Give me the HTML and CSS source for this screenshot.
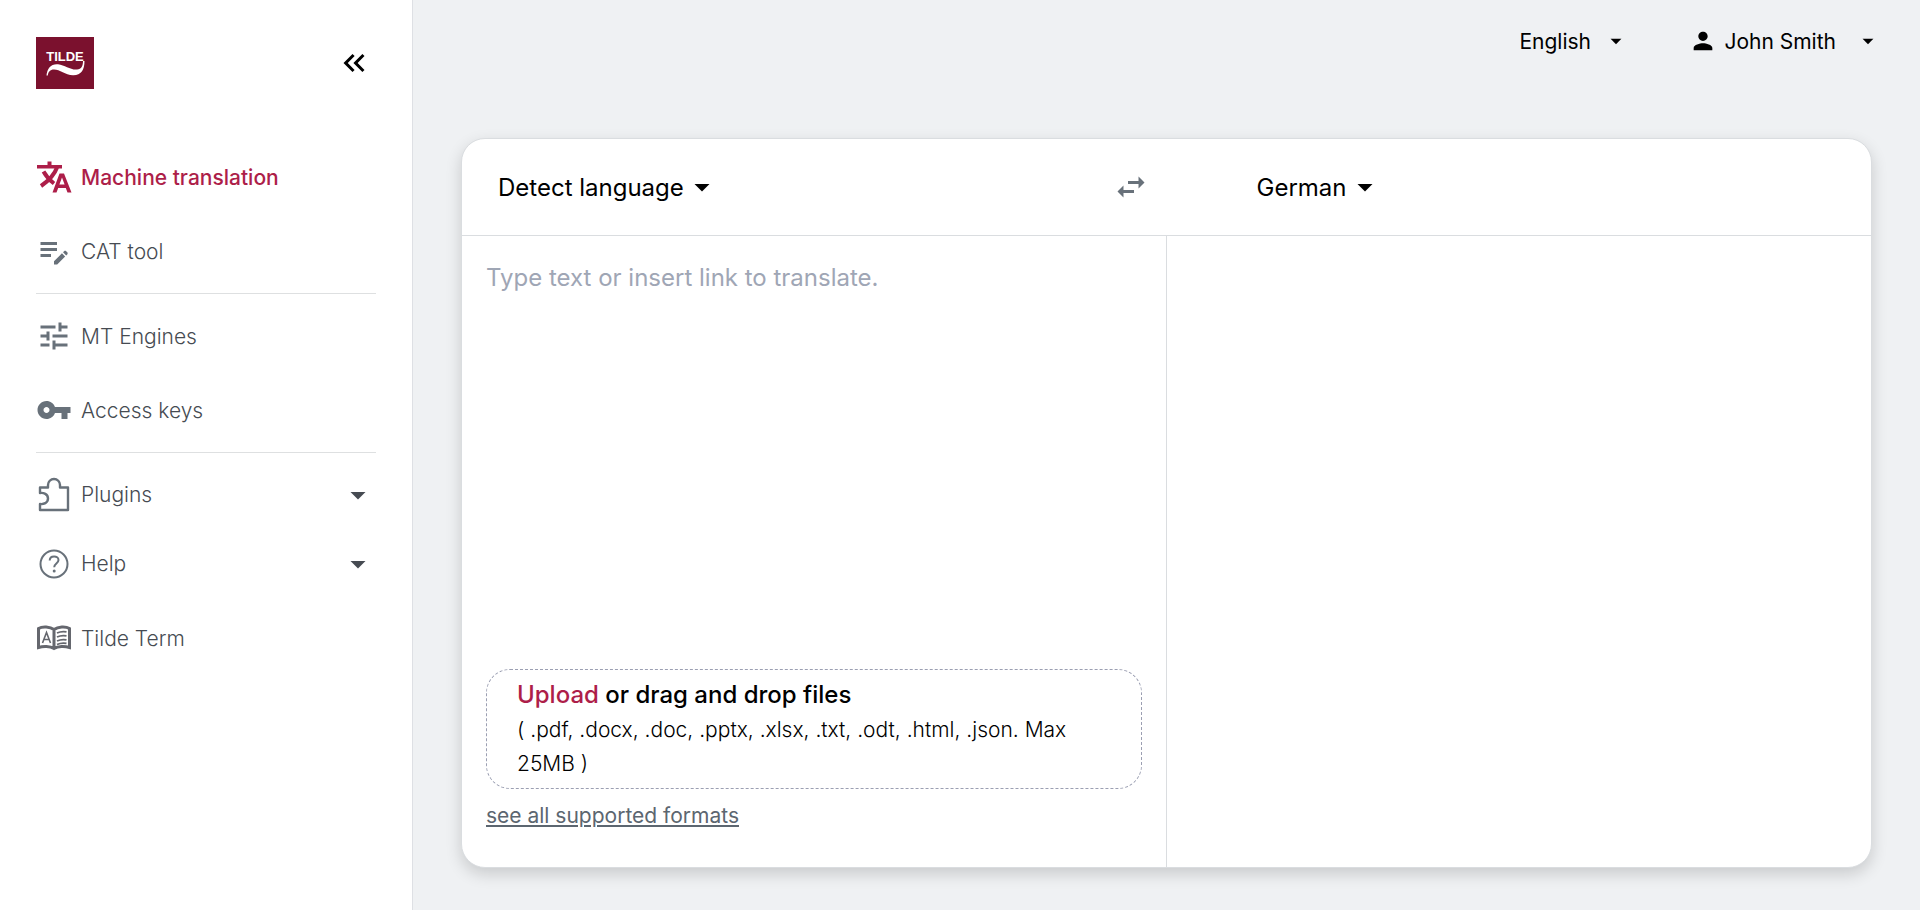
FILE: index.html
```html
<!DOCTYPE html>
<html lang="en">
<head>
<meta charset="utf-8">
<title>Tilde MT</title>
<link rel="stylesheet" href="styles.css">
</head>
<body>
<div class="app">
  <aside class="sidebar">
    <div class="brand">
      <a class="logo" href="#" aria-label="Tilde">
        <svg viewBox="0 0 58 52" width="58" height="52">
          <rect width="58" height="52" fill="#7b112e"/>
          <text class="logo-text" x="29" y="24" text-anchor="middle">TILDE</text>
          <path d="M10.500 38.500C11 31 15.500 26.500 22 27.200C29 28 34 33 41 32.500C45.500 32 47 29 47 24H48.500C48.500 33 45 38.500 37 38.300C29 38 24 32.500 18 32.500C14 32.500 12.200 35 11.800 38.500Z" fill="#fff"/>
        </svg>
      </a>
      <button class="icon-button" type="button" aria-label="Collapse menu">
        <svg class="icon" viewBox="0 0 24 24"><path d="M17.590 18 19 16.590 14.420 12 19 7.410 17.590 6l-6 6zM11 18l1.410-1.410L7.830 12l4.580-4.590L11 6l-6 6z"/></svg>
      </button>
    </div>
    <nav class="nav">
      <div class="nav-group">
        <a class="nav-item active" href="#">
          <svg class="icon" viewBox="0 0 36 36"><path d="M1 6h10.500V2.500h4V6h10.500v3.500H1z"/><path d="M21 8.500C18.500 15.500 13 21.500 5 27M7.500 12.500C10 17 14 21.500 18 24.500" fill="none" stroke="currentColor" stroke-width="4"/><path fill-rule="evenodd" d="M23.500 14.500h4.500l7.500 19h-4l-1.700-4.500h-7.600L20.500 33.500h-4zM23.400 25.500h5.200L26 18.500z"/></svg>
          <span>Machine translation</span>
        </a>
        <a class="nav-item" href="#">
          <svg class="icon" viewBox="0 0 24 24"><path d="M3 10h11v2H3zm0-2h11V6H3zm0 8h7v-2H3zm15.010-3.130.710-.710c.390-.390 1.020-.390 1.410 0l.710.710c.390.390.390 1.020 0 1.410l-.710.710zm-.710.710-5.300 5.300V21h2.120l5.300-5.300z"/></svg>
          <span>CAT tool</span>
        </a>
      </div>
      <div class="nav-group">
        <a class="nav-item" href="#">
          <svg class="icon" viewBox="0 0 24 24"><path d="M3 17v2h6v-2zM3 5v2h10V5zm10 16v-2h8v-2h-8v-2h-2v6zM7 9v2H3v2h4v2h2V9zm14 4v-2H11v2zm-6-4h2V7h4V5h-4V3h-2z"/></svg>
          <span>MT Engines</span>
        </a>
        <a class="nav-item" href="#">
          <svg class="icon" viewBox="0 0 24 24"><path d="M12.650 10C11.830 7.670 9.610 6 7 6c-3.310 0-6 2.690-6 6s2.690 6 6 6c2.610 0 4.830-1.670 5.650-4H17v4h4v-4h2v-4zM7 14c-1.100 0-2-.9-2-2s.9-2 2-2 2 .9 2 2-.9 2-2 2z"/></svg>
          <span>Access keys</span>
        </a>
      </div>
      <div class="nav-group">
        <button class="nav-item compact" type="button">
          <svg class="icon" viewBox="0 0 36 36"><path d="M4 10.500h8v-2.500a6 6 0 0 1 12 0v2.500h8V33H4v-6c3.500.5 8-1 8-5.500s-4.500-6-8-5.500z" fill="none" stroke="currentColor" stroke-width="2.400" stroke-linejoin="round"/></svg>
          <span>Plugins</span>
          <svg class="icon caret" viewBox="0 0 24 24"><path d="M7 10l5 5 5-5z"/></svg>
        </button>
        <button class="nav-item compact" type="button">
          <svg class="icon" viewBox="0 0 36 36"><g fill="none" stroke="currentColor" stroke-width="2"><circle cx="18" cy="18" r="13.500"/><path d="M13.700 14.500c0-5.500 8.800-5.300 8.800-.5 0 3.500-4.300 3.500-4.300 7.200"/></g><circle cx="18.200" cy="25" r="1.500"/></svg>
          <span>Help</span>
          <svg class="icon caret" viewBox="0 0 24 24"><path d="M7 10l5 5 5-5z"/></svg>
        </button>
        <a class="nav-item last" href="#">
          <svg class="icon" viewBox="0 0 36 36"><g fill="none" stroke="#65676e" stroke-width="3"><path d="M18 9.500C14 6.500 6.500 6 2.500 8.500V27.500C7 26 14 26 18 28.500C22 26 29 26 33.500 27.500V8.500C29.500 6 22 6.500 18 9.500zV28"/><path d="M21 13c3-1.500 6-1.800 9.500-1.200M21 17c3-1.500 6-1.800 9.500-1.200M21 21c3-1.500 6-1.800 9.500-1.200M21 24.500c3-1.500 6-1.800 9.500-1.200" stroke-width="1.800"/><path d="M6.500 23 10.500 12.500l4 10.500M7.800 19.500h5.400" stroke-width="1.600"/></g></svg>
          <span>Tilde Term</span>
        </a>
      </div>
    </nav>
  </aside>

  <div class="content">
    <header class="topbar">
      <div class="picker locale">
        <select aria-label="Interface language"><option>English</option></select>
        <svg class="caret-small" viewBox="0 0 24 24"><path d="M7 10l5 5 5-5z"/></svg>
      </div>
      <button class="user" type="button">
        <svg class="person" viewBox="0 0 24 24"><path d="M12 12c2.210 0 4-1.790 4-4s-1.790-4-4-4-4 1.790-4 4 1.790 4 4 4zm0 2c-2.670 0-8 1.340-8 4v2h16v-2c0-2.660-5.330-4-8-4z"/></svg>
        <span class="user-name">John Smith</span>
        <svg class="caret-small" viewBox="0 0 24 24"><path d="M7 10l5 5 5-5z"/></svg>
      </button>
    </header>

    <main class="translator">
      <div class="languages">
        <div class="source-language">
          <div class="picker">
            <select aria-label="Source language"><option>Detect language</option></select>
            <svg class="icon" viewBox="0 0 24 24"><path d="M7 10l5 5 5-5z"/></svg>
          </div>
          <button class="icon-button swap" type="button" aria-label="Swap languages">
            <svg class="icon" viewBox="0 0 24 24"><path d="M6.990 11 3 15l3.990 4v-3H14v-2H6.990zM21 9l-3.990-4v3H10v2h7.010v3z"/></svg>
          </button>
        </div>
        <div class="target-language">
          <div class="picker">
            <select aria-label="Target language"><option>German</option></select>
            <svg class="icon" viewBox="0 0 24 24"><path d="M7 10l5 5 5-5z"/></svg>
          </div>
        </div>
      </div>
      <div class="panes">
        <section class="source">
          <textarea aria-label="Text to translate" placeholder="Type text or insert link to translate."></textarea>
          <div class="dropzone">
            <p class="drop-title"><button class="upload" type="button">Upload</button> or drag and drop files</p>
            <p class="drop-formats">( .pdf, .docx, .doc, .pptx, .xlsx, .txt, .odt, .html, .json. Max 25MB )</p>
          </div>
          <a class="formats-link" href="#">see all supported formats</a>
        </section>
        <section class="target" aria-label="Translation"></section>
      </div>
    </main>
  </div>
</div>
</body>
</html>
```
FILE: styles.css
```css
* {
  box-sizing: border-box;
}

body {
  margin: 0;
  font-family: Inter, "Liberation Sans", sans-serif;
  font-size: 21px;
  color: #000;
  background: #eff1f3;
}

button,
select,
textarea {
  margin: 0;
  padding: 0;
  border: 0;
  background: none;
  font: inherit;
  color: inherit;
}

svg {
  display: block;
  flex: none;
  fill: currentColor;
}

.icon {
  width: 36px;
  height: 36px;
}

.app {
  display: flex;
  min-height: 100vh;
}

.sidebar {
  flex: none;
  width: 413px;
  padding: 37px 36px;
  border-right: 1px solid #dee0e4;
  background: #fff;
}

.brand {
  display: flex;
  align-items: center;
  justify-content: space-between;
  padding-right: 4px;
  margin-bottom: 51px;
}

.logo-text {
  font: bold 13px "Liberation Sans Narrow", "Liberation Sans", sans-serif;
  fill: #fff;
}

.icon-button {
  cursor: pointer;
}

.nav-group + .nav-group {
  padding-top: 5px;
  margin-top: 5px;
  border-top: 1px solid #dee0e1;
}

.nav-group:last-child {
  padding-top: 7px;
}

.nav-item {
  display: flex;
  align-items: center;
  gap: 9px;
  width: 100%;
  height: 74px;
  color: #464b52;
  font-weight: 300;
  text-align: left;
  text-decoration: none;
}

.nav-item .icon {
  color: #68717a;
}

.nav-item .caret {
  margin-left: auto;
  color: #464b52;
}

.nav-item.compact {
  height: 69px;
}

.nav-item.last {
  margin-top: 3px;
}

.nav-item.active,
.nav-item.active .icon {
  color: #ad1e49;
  font-weight: 500;
}

.content {
  display: flex;
  flex: 1;
  flex-direction: column;
  min-width: 0;
  padding: 0 48px 42px;
}

.topbar {
  display: flex;
  align-items: center;
  justify-content: flex-end;
  gap: 60px;
  height: 82px;
  margin-bottom: 56px;
}

.picker {
  display: flex;
  align-items: center;
}

.picker select {
  appearance: none;
  cursor: pointer;
}

.locale {
  gap: 12px;
}

.user {
  display: flex;
  align-items: center;
  gap: 7px;
  margin-right: -9px;
  cursor: pointer;
}

.user-name {
  margin-right: 12px;
}

.person {
  width: 28px;
  height: 28px;
}

.caret-small {
  width: 26px;
  height: 26px;
}

.translator {
  display: flex;
  flex: 1;
  flex-direction: column;
  border: 1px solid #dadde0;
  border-radius: 24px;
  background: #fff;
  box-shadow: 0 6px 16px rgba(0, 0, 0, 0.16);
}

.languages {
  display: grid;
  grid-template-columns: 1fr 1fr;
  height: 97px;
  border-bottom: 1px solid #dadde0;
  font-size: 24px;
}

.source-language,
.target-language {
  display: flex;
  align-items: center;
  justify-content: space-between;
}

.source-language {
  padding: 0 18px 0 36px;
}

.target-language {
  padding-left: 90px;
}

.swap {
  color: #68717a;
}

.panes {
  display: grid;
  flex: 1;
  grid-template-columns: 1fr 1fr;
}

.source {
  display: flex;
  flex-direction: column;
  align-items: flex-start;
  padding: 24px 24px 34px;
  border-right: 1px solid #dadde0;
}

.source textarea {
  flex: 1;
  width: 100%;
  font-size: 24px;
  line-height: 36px;
  resize: none;
}

.source textarea::placeholder {
  color: #9fa6b5;
  opacity: 1;
}

.dropzone {
  width: 100%;
  padding: 7px 30px;
  border: 1px dashed #9b9fb2;
  border-radius: 24px;
}

.dropzone p {
  margin: 0;
}

.drop-title {
  font-size: 24px;
  font-weight: 500;
  line-height: 36px;
}

.upload {
  color: #ad1e49;
  cursor: pointer;
}

.drop-formats {
  font-weight: 300;
  line-height: 34px;
}

.formats-link {
  margin-top: 10px;
  color: #5c6670;
  line-height: 34px;
}
```
